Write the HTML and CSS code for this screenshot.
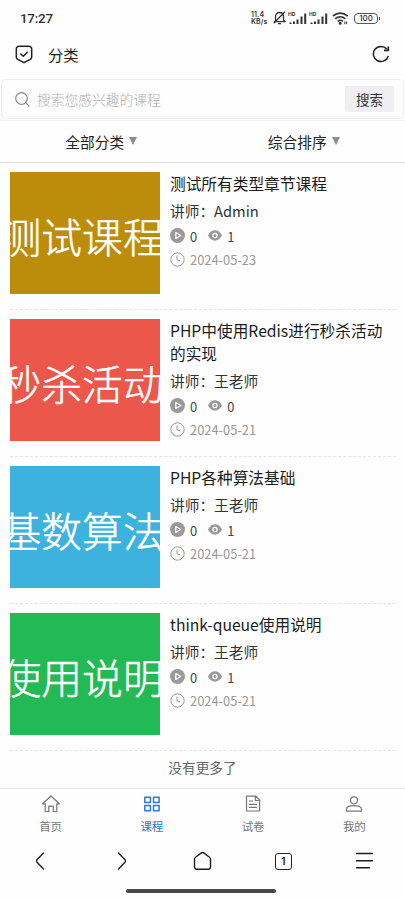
FILE: index.html
```html
<!DOCTYPE html>
<html lang="zh-CN">
<head>
<meta charset="utf-8">
<meta name="viewport" content="width=device-width, initial-scale=1">
<title>分类</title>
<link rel="stylesheet" href="styles.css">
</head>
<body>
<svg width="0" height="0" class="defs">
  <symbol id="play" viewBox="0 0 14 14"><circle cx="7" cy="7" r="7" fill="#999"/><path d="M5.4 4.3v5.4L10 7z" fill="none" stroke="#fff" stroke-width="1.1" stroke-linejoin="round"/></symbol>
  <symbol id="eye" viewBox="0 0 14 11"><path d="M0 5.5C1.8 2.2 4.2.3 7 .3s5.2 1.900 7 5.200c-1.800 3.300-4.200 5.200-7 5.200S1.800 8.800 0 5.500z" fill="#999"/><circle cx="7" cy="5.500" r="2.100" fill="none" stroke="#fff" stroke-width="1.200"/></symbol>
  <symbol id="clock" viewBox="0 0 15 15"><circle cx="7.500" cy="7.500" r="6.700" fill="none" stroke="#999"/><path d="M7 3.500v4.300l3.200 1.200" fill="none" stroke="#999"/></symbol>
  <symbol id="signal" viewBox="0 0 18 13"><path d="M1.500 10.500v1.500M5 9.500V12M8.500 7.500V12M12.500 4.500V12M16.200 1.500V12" fill="none" stroke="#333" stroke-width="2"/></symbol>
</svg>
<header class="status">
  <span class="time">17:27</span>
  <div class="indicators">
    <span class="speed"><span>11.4</span><span>KB/s</span></span>
    <svg class="bell" width="13" height="14" viewBox="0 0 13 14" fill="none" stroke="#333" stroke-width="1.300"><path d="M2.500 10V5.800C2.500 3 4.200 1.500 6.500 1.500S10.500 3 10.500 5.800V9l1.500 1.600H1M5 12.600h3M.7 12.300 12 .7"/></svg>
    <span class="cell"><svg width="18" height="13"><use href="#signal"/></svg><i>HD</i></span>
    <span class="cell"><svg width="18" height="13"><use href="#signal"/></svg><i>HD</i></span>
    <svg class="wifi" width="17" height="13" viewBox="0 0 17 13" fill="none" stroke="#333" stroke-width="1.600"><path d="M.8 4.200c4.500-4.100 10.400-4.100 14.900 0M3.200 6.900c3-2.800 7.100-2.800 10.100 0M5.600 9.400c1.600-1.400 3.700-1.400 5.300 0"/><circle cx="8.200" cy="11.300" r=".7" fill="#333"/><path d="M12.800 9.500v2.700M14.600 9.500v2.700" stroke-width="1"/></svg>
    <span class="battery">100</span>
  </div>
</header>
<div class="titlebar">
  <svg width="18" height="19" viewBox="0 0 18 19" fill="none" stroke="#222" stroke-width="1.500" stroke-linecap="round" stroke-linejoin="round"><path d="M4 1.200h10a2.700 2.700 0 0 1 2.700 2.700v8.200c0 1-.5 1.800-1.400 2.300L9 17.700l-6.300-3.300a2.500 2.500 0 0 1-1.400-2.300V3.900A2.700 2.700 0 0 1 4 1.200z"/><path d="m5.800 9 2.500 2.300 4-4"/></svg>
  <h1>分类</h1>
  <svg width="18" height="18" viewBox="0 0 18 18" fill="none" stroke="#222" stroke-width="1.500"><path d="M14.800 4.100A7.600 7.600 0 1 0 16.300 11"/><path d="M16.300 1.400v4h-4.300" stroke-width="1.700"/></svg>
</div>
<div class="searchwrap">
  <div class="search">
    <svg width="15" height="15" viewBox="0 0 15 15" fill="none" stroke="#888" stroke-width="1.200"><circle cx="6.500" cy="6.500" r="5.800"/><path d="m10.700 10.700 3.700 3.700"/></svg>
    <span class="placeholder">搜索您感兴趣的课程</span>
    <button>搜索</button>
  </div>
</div>
<div class="filters"><div>全部分类<i></i></div><div>综合排序<i></i></div></div>
<main>
  <article>
    <div class="thumb gold"><span>测试课程</span></div>
    <div class="info"><h2>测试所有类型章节课程</h2><p class="teacher">讲师：Admin</p>
      <p class="stats"><svg width="15" height="15"><use href="#play"/></svg><span>0</span><svg class="eye" width="14" height="11"><use href="#eye"/></svg><span>1</span></p>
      <p class="date"><svg width="15" height="15"><use href="#clock"/></svg><span>2024-05-23</span></p></div>
  </article>
  <article>
    <div class="thumb red"><span>秒杀活动</span></div>
    <div class="info"><h2>PHP中使用Redis进行秒杀活动的实现</h2><p class="teacher">讲师：王老师</p>
      <p class="stats"><svg width="15" height="15"><use href="#play"/></svg><span>0</span><svg class="eye" width="14" height="11"><use href="#eye"/></svg><span>0</span></p>
      <p class="date"><svg width="15" height="15"><use href="#clock"/></svg><span>2024-05-21</span></p></div>
  </article>
  <article>
    <div class="thumb blue"><span>基数算法</span></div>
    <div class="info"><h2>PHP各种算法基础</h2><p class="teacher">讲师：王老师</p>
      <p class="stats"><svg width="15" height="15"><use href="#play"/></svg><span>0</span><svg class="eye" width="14" height="11"><use href="#eye"/></svg><span>1</span></p>
      <p class="date"><svg width="15" height="15"><use href="#clock"/></svg><span>2024-05-21</span></p></div>
  </article>
  <article>
    <div class="thumb green"><span>使用说明</span></div>
    <div class="info"><h2>think-queue使用说明</h2><p class="teacher">讲师：王老师</p>
      <p class="stats"><svg width="15" height="15"><use href="#play"/></svg><span>0</span><svg class="eye" width="14" height="11"><use href="#eye"/></svg><span>1</span></p>
      <p class="date"><svg width="15" height="15"><use href="#clock"/></svg><span>2024-05-21</span></p></div>
  </article>
  <p class="end">没有更多了</p>
</main>
<nav class="tabs">
  <a><svg width="20" height="20" viewBox="0 0 20 20"><path d="M4.200 9.800H1.600L10 2l8.400 7.800h-2.600v7.700h-3.600v-5.300H7.800v5.300H4.200z"/></svg>首页</a>
  <a class="active"><svg width="20" height="20" viewBox="0 0 20 20"><path d="M2.800 3.200h5.600v5.300H2.800zM11.500 3.200h5.600v5.300h-5.600zM2.800 11.500h5.600v5.300H2.800zM11.500 11.500h5.600v5.300h-5.600z"/></svg>课程</a>
  <a><svg width="20" height="20" viewBox="0 0 20 20"><path d="M3.500 2.200h9.300l3.800 3.800v11H3.500zM12.300 2.500v4h4M6 7h4M6 10.300h8M6 13.300h8"/></svg>试卷</a>
  <a><svg width="20" height="20" viewBox="0 0 20 20"><circle cx="10" cy="6.300" r="3.500"/><path d="M2.500 17.200v-2c0-2.300 3-3.500 7.500-3.500s7.500 1.200 7.500 3.500v2z"/></svg>我的</a>
</nav>
<nav class="browser">
  <svg width="20" height="20" viewBox="0 0 20 20"><path d="m12.500 2-6.500 6.700q-1 1.300 0 2.600L12.500 18"/></svg>
  <svg width="20" height="20" viewBox="0 0 20 20"><path d="m6.500 2 6.500 6.700q1 1.300 0 2.600L6.500 18"/></svg>
  <svg width="20" height="20" viewBox="0 0 20 20"><path d="M1.500 8.300c0-.8.400-1.500 1-2l5.500-4.200c.9-.7 2.100-.7 3 0l5.500 4.200c.6.500 1 1.200 1 2V16a2.200 2.200 0 0 1-2.200 2.200H3.700A2.200 2.200 0 0 1 1.500 16z"/></svg>
  <span class="pages"><b>1</b></span>
  <svg width="20" height="20" viewBox="0 0 20 20"><path d="M2.500 2.500h16M2.500 9.700h16M2.500 16.700h13"/></svg>
</nav>
<div class="homebar"><i></i></div>
</body>
</html>
```
FILE: styles.css
```css
* { box-sizing: border-box; margin: 0; padding: 0; }
body { width: 405px; height: 900px; overflow: hidden; display: flex; flex-direction: column; background: #fefefe; color: #222; font-family: "Noto Sans CJK SC", sans-serif; }
svg { display: block; flex: none; }
i, b { font-style: normal; }
.defs { position: absolute; }

.status { height: 35px; flex: none; display: flex; align-items: center; justify-content: space-between; padding: 1px 27px 0 20px; }
.time { font: 500 13.5px/18px Roboto, sans-serif; letter-spacing: -.3px; color: #333; }
.indicators { display: flex; align-items: center; }
.speed { width: 20px; display: flex; flex-direction: column; font: 600 7px/7px Inter, sans-serif; letter-spacing: .1px; color: #333; white-space: nowrap; }
.bell { margin-left: 2px; }
.cell { position: relative; margin-left: 3px; }
.cell i { position: absolute; left: -1px; top: -1px; font: 700 5px/6px Inter, sans-serif; color: #333; }
.wifi { margin-left: 4px; }
.battery { position: relative; width: 24px; height: 11px; margin-left: 5px; border: 1px solid #555; border-radius: 4px; font: 500 8px/9px Inter, sans-serif; text-align: center; color: #333; }
.battery::after { content: ""; position: absolute; right: -3px; top: 3px; width: 1px; height: 3px; background: #444; }

.titlebar { height: 44px; flex: none; display: flex; align-items: center; padding: 0 15px 6px 15px; }
.titlebar h1 { flex: 1; margin: -1px 0 0 15px; font-size: 15.3px; font-weight: 400; line-height: 22px; }
.searchwrap { height: 42px; flex: none; padding: 0 1px 2px; border-bottom: 1px solid #f1f1f1; }
.search { height: 40px; display: flex; align-items: center; border: 1px solid #eee; border-radius: 5px; padding: 0 9px 0 13px; }
.placeholder { flex: 1; margin-left: 7px; font-size: 13.75px; font-weight: 300; color: #b0b0b4; }
.search button { width: 49px; height: 26px; border: 0; border-radius: 2px; background: #efeff3; color: #333; font: 13.5px/24px "Noto Sans CJK SC", sans-serif; }
.filters { height: 42px; flex: none; display: flex; border-bottom: 1px solid #e2e2e5; font-size: 14.7px; line-height: 43px; }
.filters div { flex: 1; display: flex; align-items: center; justify-content: center; }
.filters i { margin: -1px 0 0 5px; border: 4.500px solid transparent; border-top: 8px solid #8c8c8c; border-bottom: 0; }

main { flex: 1; min-height: 0; }
article { height: 147px; margin: 0 9px 0 10px; padding-top: 9px; display: flex; border-bottom: 1px dashed #e4e4e4; }
.thumb { width: 150px; height: 122px; flex: none; overflow: hidden; color: #fff; font-size: 40.800px; font-weight: 300; line-height: 128px; white-space: nowrap; -webkit-text-stroke: .5px #fff; }
.thumb span { display: block; margin-left: -9.500px; }
.gold { background: #bc8d0a; }
.red { background: #eb574a; }
.blue { background: #3eb2de; }
.green { background: #23b955; }
.info { flex: 1; padding-left: 10px; }
.info h2 { font-size: 15.7px; font-weight: 400; line-height: 23px; color: #1c1c1c; }
.teacher { margin-top: 5px; font-size: 14.7px; line-height: 22px; color: #333; }
.stats, .date { display: flex; align-items: center; font-size: 12.9px; }
.stats { height: 23px; margin-top: 2px; color: #444; }
.stats span, .date span { margin-left: 5px; padding-top: 1px; line-height: 23px; }
.stats .eye { margin-left: 11px; }
.date { height: 24px; color: #999; }
.end { padding-top: 6px; text-align: center; font-size: 13.7px; line-height: 20px; color: #666; }

.tabs { height: 50px; flex: none; display: flex; border-top: 1px solid #eaeaea; }
.tabs a { flex: 1; display: flex; flex-direction: column; align-items: center; padding-top: 5px; font-size: 11.5px; line-height: 24px; color: #777; }
.tabs svg { fill: none; stroke: #777; stroke-width: 1.200; stroke-linejoin: round; }
.tabs .active { color: #2d78d5; }
.tabs .active svg { stroke: #2d78d5; stroke-width: 1.500; }
.browser { height: 45px; flex: none; display: flex; justify-content: space-between; align-items: center; padding: 1px 31px 0; }
.browser svg { fill: none; stroke: #1e1e1e; stroke-width: 1.400; stroke-linecap: round; stroke-linejoin: round; }
.pages { width: 17px; height: 17px; margin: 0 1.5px; border: 1.500px solid #222; border-radius: 3px; display: flex; align-items: center; justify-content: center; }
.pages b { font: 600 10px/14px Inter, sans-serif; }
.homebar { height: 17px; flex: none; display: flex; justify-content: center; padding-top: 6px; }
.homebar i { width: 150px; height: 4px; margin-right: 3px; border-radius: 2px; background: #484848; }
```
